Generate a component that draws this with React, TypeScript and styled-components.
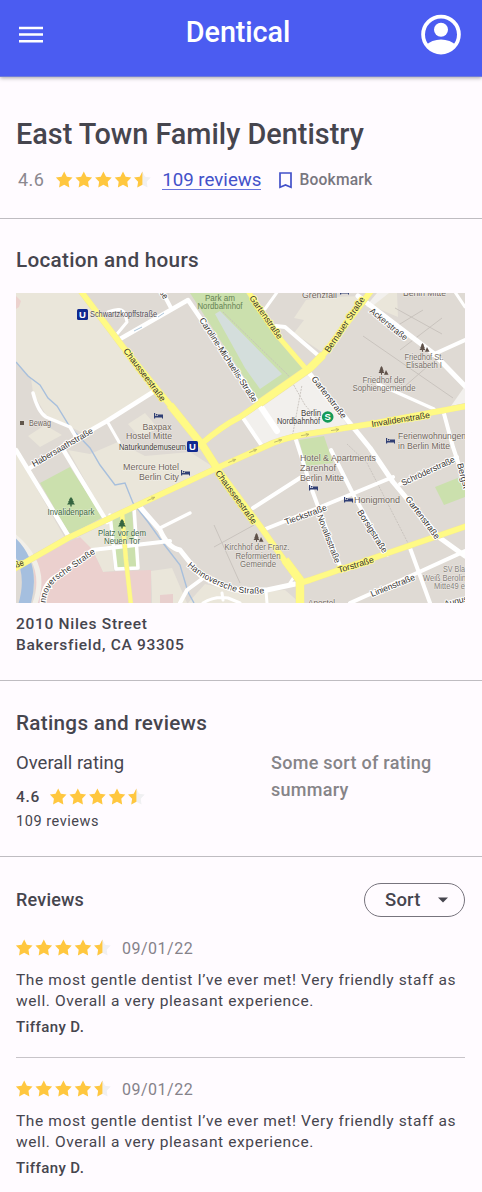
import React from "react";
import styled, { createGlobalStyle } from "styled-components";

const GlobalStyle = createGlobalStyle`
  * { box-sizing: border-box; }
  body { margin: 0; background: #fffbff; color: #46454e; font-family: Roboto, "Liberation Sans", sans-serif; }
  h1, h2, h3, p { margin: 0; }
`;

const Page = styled.div`
  width: 100%;
  min-height: 1192px;
  background: #fffbff;
  overflow: hidden;
`;

const Header = styled.header`
  height: 77px;
  padding: 0 20px 0 19px;
  display: grid;
  grid-template-columns: 40px 1fr 41px;
  align-items: start;
  background: #4b5cf1;
  border-bottom: 1px solid #6f7cd9;
  box-shadow: 0 1px 4px rgba(0, 0, 0, 0.35);
`;

const IconButton = styled.button<{ $top: number }>`
  display: flex;
  padding: 0;
  margin-top: ${(p) => p.$top}px;
  border: 0;
  background: none;
`;

const Brand = styled.div`
  margin-top: 14px;
  padding-right: 4px;
  text-align: center;
  color: #fff;
  font-size: 28.8px;
  line-height: 36px;
  font-weight: 500;
  letter-spacing: -0.1px;
`;

const Section = styled.section<{ $top: number; $bottom?: number }>`
  padding: ${(p) => p.$top}px 17px ${(p) => p.$bottom ?? 0}px 16px;
  & + & { border-top: 1px solid #bfbcc1; }
`;

const Title = styled.h1`
  font-size: 28.85px;
  line-height: 36px;
  font-weight: 500;
`;

const Heading = styled.h2`
  font-size: 20.7px;
  line-height: 28px;
  font-weight: 500;
  letter-spacing: 0.3px;
`;

const Row = styled.div<{ $mt?: number; $between?: boolean; $h?: number }>`
  display: flex;
  align-items: center;
  justify-content: ${(p) => (p.$between ? "space-between" : "flex-start")};
  height: ${(p) => p.$h ?? 24}px;
  margin-top: ${(p) => p.$mt ?? 0}px;
`;

const Text = styled.span<{ $size: number; $lh?: number; $w?: number; $ls?: number; $color?: string; $ml?: number; $mt?: number }>`
  display: block;
  white-space: nowrap;
  font-size: ${(p) => p.$size}px;
  line-height: ${(p) => p.$lh ?? 24}px;
  font-weight: ${(p) => p.$w ?? 400};
  letter-spacing: ${(p) => p.$ls ?? 0}px;
  color: ${(p) => p.$color ?? "inherit"};
  margin: ${(p) => p.$mt ?? 0}px 0 0 ${(p) => p.$ml ?? 0}px;
`;

const ReviewsLink = styled.a`
  margin: 1px 0 0 10px;
  font-size: 18.7px;
  line-height: 18px;
  color: #4351c9;
  border-bottom: 1px solid #6874dc;
  white-space: nowrap;
`;

const Bookmark = styled.div`
  display: flex;
  align-items: center;
  gap: 7px;
  margin-left: 18px;
`;

const MapFrame = styled.div`
  margin-top: 18px;
  height: 310px;
  svg { display: block; }
`;

const Columns = styled.div`
  display: grid;
  grid-template-columns: 255px 1fr;
  margin-top: 13px;
`;

const SortButton = styled.button`
  display: flex;
  align-items: center;
  width: 101px;
  height: 34px;
  padding: 0 16px 0 20px;
  justify-content: space-between;
  border: 1px solid #77747d;
  border-radius: 17px;
  background: transparent;
  color: #46454e;
  font-family: inherit;
`;

const ReviewItem = styled.article<{ $mt: number }>`
  padding-top: ${(p) => p.$mt}px;
  & + & { margin-top: 20px; border-top: 1px solid #c8c4c9; }
`;

const StarRow = styled.div<{ $ml: number }>`
  display: flex;
  margin-left: ${(p) => p.$ml}px;
`;

const STAR = "M0-8.75 2.65-3.64 8.32-2.7 4.28 1.39 5.14 7.08 0 4.5-5.14 7.08-4.28 1.39-8.32-2.7-2.65-3.64Z";
const HALF_STAR = "M0-8.75V4.5L-5.14 7.08-4.28 1.39-8.32-2.7-2.65-3.64Z";

function Stars({ ml = -2 }: { ml?: number }) {
  return (
    <StarRow $ml={ml}>
      <svg width="98" height="20" viewBox="0 0 98 20">
        {[0, 1, 2, 3].map((i) => (
          <path key={i} d={STAR} fill="#ffc73f" transform={`translate(${10.2 + i * 19.6} 10.3)`} />
        ))}
        <path d={STAR} fill="#f0f0f2" transform="translate(88.4 10.3)" />
        <path d={HALF_STAR} fill="#ffc73f" transform="translate(88.4 10.3)" />
      </svg>
    </StarRow>
  );
}

const WHITE_ROADS: [string, number][] = [
  ["M120 339 188 300 260 406", 4.5],
  ["M243 418 262 446", 4],
  ["M259 404 277 431", 6],
  ["M163 293 171 308", 4],
  ["M108 312Q122 306 125 314L127 322 117 334", 3],
  ["M153 392 107 421 63 446 30 468", 4.5],
  ["M107 421 119 442", 3],
  ["M33 393Q38 412 46 417L70 427 76 437", 3.5],
  ["M16 450 69 537", 4.5],
  ["M64 451 107 522", 4.5],
  ["M42 603Q42 584 56 576L92 550 170 541", 4],
  ["M140 507 160 530Q168 548 180 550L200 575Q216 586 237 590L267 590 300 583", 5],
  ["M160 528 190 513", 3.5],
  ["M110 515 116 569 138 568 134 507", 3.5],
  ["M253 508 303 476", 4],
  ["M263 530 318 508 393 477", 4],
  ["M400 484 457 457", 4],
  ["M296 440 312 490 340 566", 4],
  ["M331 450 353 494 387 555", 4],
  ["M305 368 370 448 393 482 440 538 465 556", 5],
  ["M358 296 400 328 433 353 465 386", 5],
  ["M432 355 465 340", 4],
  ["M378 384 434 409", 3.5],
  ["M443 410 453 447 465 483", 4],
  ["M276 326 285 327 320 357", 4],
  ["M265 309 278 291", 3],
  ["M410 548 430 603", 4],
  ["M350 603 417 573 465 551", 4],
  ["M455 292 465 307", 3],
  ["M180 603 187 590 202 579", 4],
  ["M203 603Q214 596 228 598L240 603M222 593 223 600", 3],
  ["M266 591 267 603M290 583 297 572", 3],
];

const YELLOW_ROADS: [string, number][] = [
  ["M14 569 68 538 123 512 170 490 217 468 273 443Q290 436 320 432L370 424 467 406", 5.5],
  ["M300 583 310 580 388 553 467 526", 5.5],
  ["M248 291 277 335 307 370", 4.5],
  ["M122 513 126 560 131 605", 4],
  ["M371 291 323 355 310 368 260 403 240 417Q222 426 200 445", 5.5],
  ["M80 290 123 347 170 405 203 446 217 468 260 526 299 581", 5.5],
  ["M170 405 203 446 217 468", 7.5],
  ["M323 355 310 368 260 403", 7.5],
  ["M285 560 300 580 300 605", 8],
];

type Label = { x: number; y: number; t: string; w?: number; r?: number; c?: string; a?: "middle" | "start" | "end"; halo?: string };
const BROWN = "#71665c";
const DARK = "#3e3b39";
const LABELS: Label[] = [
  { x: 90, y: 317, t: "Schwartzkopffstraße", w: 67, c: "#524d55" },
  { x: 220, y: 301, t: "Park am", a: "middle", w: 30, c: "#658253", halo: "#cbe0ad" },
  { x: 220, y: 309, t: "Nordbahnhof", a: "middle", w: 45, c: "#658253", halo: "#cbe0ad" },
  { x: 302, y: 298, t: "Grenzfall", w: 35, c: BROWN },
  { x: 403, y: 296, t: "Berlin Mitte", w: 43, c: BROWN },
  { x: 29, y: 426, t: "Bewag", w: 22, c: BROWN },
  { x: 157, y: 430, t: "Baxpax", a: "middle", w: 29, c: BROWN },
  { x: 149, y: 439, t: "Hostel Mitte", a: "middle", w: 46, c: BROWN },
  { x: 119, y: 450, t: "Naturkundemuseum", w: 67, c: DARK },
  { x: 123, y: 470, t: "Mercure Hotel", w: 56, c: BROWN },
  { x: 139, y: 480, t: "Berlin City", w: 40, c: BROWN },
  { x: 311, y: 416, t: "Berlin", a: "middle", w: 20, c: DARK },
  { x: 298.5, y: 424, t: "Nordbahnhof", a: "middle", w: 43, c: DARK },
  { x: 424, y: 360, t: "Friedhof St.", a: "middle", w: 39, c: "#777068" },
  { x: 424, y: 368, t: "Elisabeth I", a: "middle", w: 36, c: "#777068" },
  { x: 384, y: 383, t: "Friedhof der", a: "middle", w: 43, c: "#777068" },
  { x: 384, y: 391, t: "Sophiengemeinde", a: "middle", w: 63, c: "#777068" },
  { x: 398, y: 439, t: "Ferienwohnungen", w: 68, c: BROWN },
  { x: 398, y: 449, t: "in Berlin Mitte", w: 52, c: BROWN },
  { x: 300, y: 461, t: "Hotel & Apartments", w: 76, c: BROWN },
  { x: 300, y: 471, t: "Zarenhof", w: 36, c: BROWN },
  { x: 300, y: 481, t: "Berlin Mitte", w: 44, c: BROWN },
  { x: 354, y: 503, t: "Honigmond", w: 46, c: BROWN },
  { x: 71, y: 515, t: "Invalidenpark", a: "middle", w: 47, c: "#426846" },
  { x: 122, y: 536, t: "Platz vor dem", a: "middle", w: 48, c: "#426846" },
  { x: 122, y: 544, t: "Neuen Tor", a: "middle", w: 36, c: "#426846" },
  { x: 257, y: 550, t: "Kirchhof der Franz.", a: "middle", w: 65, c: "#777068" },
  { x: 258, y: 559, t: "Reformierten", a: "middle", w: 45, c: "#777068" },
  { x: 258, y: 567, t: "Gemeinde", a: "middle", w: 36, c: "#777068" },
  { x: 443, y: 572, t: "SV Bla", w: 22, c: "#86817a" },
  { x: 423, y: 581, t: "Weiß Berolin", w: 43, c: "#86817a" },
  { x: 434, y: 589, t: "Mitte49 e", w: 31, c: "#86817a" },
  { x: 308, y: 606, t: "Apostel", w: 27, c: BROWN },
  { x: 123, y: 351, t: "Chausseestraße", r: 53, w: 64, halo: "#fffa85" },
  { x: 215, y: 473, t: "Chausseestraße", r: 54, w: 64, halo: "#fffa85" },
  { x: 249, y: 298, t: "Gartenstraße", r: 55, w: 51, halo: "#fffa85" },
  { x: 329, y: 353, t: "Bernauer Straße", r: -56, w: 65, halo: "#fffa85" },
  { x: 372, y: 427, t: "Invalidenstraße", r: -9, w: 59, halo: "#fffa85" },
  { x: 339, y: 573, t: "Torstraße", r: -17, w: 37, halo: "#fffa85" },
  { x: 16, y: 568, t: "ße", r: -20, w: 9, halo: "#fffa85" },
  { x: 199, y: 320, t: "Caroline-Michaelis-Straße", r: 57, w: 99 },
  { x: 34, y: 467, t: "Habersaathstraße", r: -30, w: 69 },
  { x: 159, y: 292, t: "ße", r: 58, w: 9 },
  { x: 311, y: 379, t: "Gartenstraße", r: 52, w: 51 },
  { x: 369, y: 312, t: "Ackerstraße", r: 39, w: 46 },
  { x: 403, y: 486, t: "Schröderstraße", r: -25, w: 58 },
  { x: 405, y: 499, t: "Gartenstraße", r: 53, w: 51 },
  { x: 457, y: 464, t: "Bergst", r: 75, w: 26 },
  { x: 286, y: 525, t: "Tieckstraße", r: -20, w: 44 },
  { x: 317, y: 516, t: "Novalisstraße", r: 69, w: 51 },
  { x: 357, y: 512, t: "Borsigstraße", r: 58, w: 49 },
  { x: 372, y: 597, t: "Linienstraße", r: -22, w: 47 },
  { x: 445, y: 607, t: "Augus", r: -14, w: 24 },
];

const BEDS = [[154, 413], [181, 470], [309, 485], [344, 497], [386, 438], [340, 289]];
const TREES = [
  { x: 71, y: 497, c: "#356540" },
  { x: 122, y: 519, c: "#356540" },
  { x: 383, y: 366, c: "#5f5149", double: true },
  { x: 424, y: 343, c: "#5f5149", double: true },
  { x: 258, y: 533, c: "#5f5149", double: true },
];

function CityMap() {
  return (
    <svg width="449" height="310" viewBox="16 293 449 310" fontFamily="Liberation Sans, sans-serif">
      <defs>
        <path id="hannoverA" d="M45.5 603Q46 590 57 580L100 550" />
        <path id="hannoverB" d="M187 566Q206 583 236 592 252 595 276 592" />
      </defs>
      <rect x="16" y="293" width="449" height="310" fill="#dfdad4" />
      <g fill="#eae6da">
        <path d="M16 293H82L153 391 85 434 46 415 33 393 31 378 16 362Z" />
        <path d="M16 452 65 538 16 563ZM68 450 90 454 118 442 145 456 190 452 215 468 107 520Z" />
        <path d="M76 538 109 522 112 545 90 549ZM92 549 112 548 114 571 103 572ZM151 571 172 568 187 603H152V594ZM28 436 45 425 62 435 40 447ZM128 424 145 413 158 428 140 438Z" />
        <path d="M294 318 306 300 330 297 366 296 326 355 294 333 304 320ZM372 306 398 317 397 293H383ZM188 603 205 584 240 592 285 590 300 603Z" />
      </g>
      <path d="M16 296 21 301 19 307 16 309Z" fill="#ecd2ce" />
      <path d="M366 306 377 293H389L370 308Z" fill="#f2f0ed" />
      <path d="M33 558 80 537 92 549 103 572 151 570V603H36Z" fill="#ebd0ce" />
      <path d="M160 595 173 594V603H160Z" fill="#e8cfcd" />
      <path d="M14 536Q50 566 34 606" fill="none" stroke="#f2efe8" strokeWidth="5" />
      <path d="M11 542Q36 566 24 606" fill="none" stroke="#a5bfdf" strokeWidth="12" />
      <g fill="#cbe0ad">
        <path d="M40 483 70 467 103 517 70 535Z" />
        <path d="M112 518 132 510 134 540 114 541ZM115 548 136 546V568L117 570Z" />
        <path d="M190 293H250L305 370 260 402Z" />
        <path d="M299 440 324 436 333 463 306 466ZM435 487 465 475V497L444 505Z" />
      </g>
      <path d="M215 314 220 311 282 374 260 389 245 368Z" fill="#d4dedc" />
      <path d="M243 418 306 373 347 424 280 441 262 444Z" fill="#f2f0ed" />
      <path d="M451 406 465 386V403Z" fill="#f2f0ed" />
      <g fill="none" stroke="#c6c1bb" strokeWidth="0.9">
        <path d="M214 525 240 583M214 547 254 525M363 336 453 398M395 308 442 334M442 318 400 350M395 327 423 310M397 393 428 366" />
        <path d="M223 312 288 375 305 405 318 420M292 438 302 385M347 444 367 463 410 547" strokeDasharray="2 1" />
      </g>
      <path d="M16 362 28 376 40 385 48 398 57 406 70 427 90 448 100 465 115 485 125 483 133 503 148 522 163 543 180 565 188 592 194 603" fill="none" stroke="#a7bfdc" strokeWidth="1.4" />
      <g fill="none" stroke="#fff" strokeLinejoin="round" strokeLinecap="round">
        {WHITE_ROADS.map(([d, w]) => <path key={d} d={d} strokeWidth={w} />)}
      </g>
      <g fill="none" strokeLinejoin="round">
        {YELLOW_ROADS.map(([d, w]) => <path key={d} d={d} stroke="#efe5a3" strokeWidth={w + 0.8} />)}
        {YELLOW_ROADS.map(([d, w]) => <path key={d} d={d} stroke="#fffa85" strokeWidth={w} />)}
      </g>
      <g fill="none" stroke="#b9b468" strokeWidth="0.8">
        {[[151, 499, -25], [232, 461, -23], [253, 451, -23], [278, 441, -18], [305, 435, -10], [335, 430, -8]].map(([x, y, r]) => (
          <path key={x} d="M-4 0H4M1-1.5 4 0 1 1.5" transform={`translate(${x} ${y}) rotate(${r})`} />
        ))}
      </g>
      <path d="M134 331 142 327M158 317 164 313" fill="none" stroke="#94b6d2" strokeWidth="0.8" />
      {BEDS.map(([x, y]) => (
        <path key={`${x}-${y}`} d="M0 0H1.2V3H4V1.5H9V5.5H8V4.6H1.2V5.5H0ZM2 1H3.5V2.4H2Z" fill="#303f75" transform={`translate(${x} ${y})`} />
      ))}
      {TREES.map((t) => (
        <g key={`${t.x}-${t.y}`} fill={t.c} transform={`translate(${t.x} ${t.y})`}>
          <path d="M0 0 2 2.5 1.5 3 3 5 2.3 5.3 4 7.5H.7V9.5H-.7V7.5H-4L-2.3 5.3-3 5-1.5 3-2 2.5Z" transform={t.double ? "translate(-1.5 0) scale(.75 .92)" : undefined} />
          {t.double && <path d="M3 4 5.5 8.7H1Z" />}
        </g>
      ))}
      {LABELS.map((l) => (
        <text
          key={`${l.t}${l.x}`}
          transform={`translate(${l.x} ${l.y}) rotate(${l.r ?? 0})`}
          fontSize="8.7"
          textAnchor={l.a ?? "start"}
          textLength={l.w}
          lengthAdjust="spacingAndGlyphs"
          fill={l.c ?? "#36332f"}
          stroke={l.halo ?? (l.r !== undefined ? "#fff" : "rgba(255,255,255,0.45)")}
          strokeWidth={l.r !== undefined ? 2 : 1.2}
          strokeLinejoin="round"
          paintOrder="stroke"
        >
          {l.t}
        </text>
      ))}
      <g fontSize="8.7" fill="#36332f" stroke="#fff" strokeWidth="2" paintOrder="stroke">
        <text><textPath href="#hannoverA">nnoversche Straße</textPath></text>
        <text><textPath href="#hannoverB">Hannoversche Straße</textPath></text>
      </g>
      <rect x="20" y="421" width="4" height="4" fill="#61564b" />
      <g fill="#fff" fontSize="9.5" fontWeight="700" textAnchor="middle">
        <rect x="77" y="309" width="11" height="11" rx="1.5" fill="#10298f" />
        <text x="82.5" y="318">U</text>
        <rect x="187" y="441" width="11" height="11" rx="1.5" fill="#10298f" />
        <text x="192.5" y="450">U</text>
        <circle cx="327.7" cy="417" r="5.8" fill="#149a58" />
        <text x="327.7" y="420.3">S</text>
      </g>
    </svg>
  );
}

const REVIEWS = [
  { date: "09/01/22", lines: ["The most gentle dentist I’ve ever met! Very friendly staff as", "well. Overall a very pleasant experience."], author: "Tiffany D.", mt: 19 },
  { date: "09/01/22", lines: ["The most gentle dentist I’ve ever met! Very friendly staff as", "well. Overall a very pleasant experience."], author: "Tiffany D.", mt: 19 },
];

export default function App() {
  return (
    <Page>
      <GlobalStyle />
      <Header>
        <IconButton $top={26} aria-label="Menu">
          <svg width="24" height="17" viewBox="0 0 24 17" fill="#fff">
            <path d="M0 .7H24V3.2H0ZM0 7.3H24V9.8H0ZM0 14H24V16.5H0Z" />
          </svg>
        </IconButton>
        <Brand>Dentical</Brand>
        <IconButton $top={14} aria-label="Account">
          <svg width="41" height="41" viewBox="0 0 41 41">
            <defs>
              <clipPath id="face"><circle cx="20" cy="20.6" r="17" /></clipPath>
            </defs>
            <circle cx="20" cy="20.6" r="17.9" fill="none" stroke="#fff" strokeWidth="3.8" />
            <g fill="#fff" clipPath="url(#face)">
              <circle cx="20" cy="15.8" r="7" />
              <circle cx="20" cy="47.6" r="22.2" />
            </g>
          </svg>
        </IconButton>
      </Header>

      <Section $top={39} $bottom={26}>
        <Title>East Town Family Dentistry</Title>
        <Row $mt={16}>
          <Text $size={18} $ls={0.4} $color="#8b888f" $ml={2}>4.6</Text>
          <Stars ml={10} />
          <ReviewsLink>109 reviews</ReviewsLink>
          <Bookmark>
            <svg width="13" height="17" viewBox="0 0 13 17" fill="none" stroke="#4351c9" strokeWidth="1.7">
              <path d="M1 1H12V15.3L6.5 12.9 1 15.3Z" />
            </svg>
            <Text $size={15.6} $w={500} $ls={0.2} $color="#78767e">Bookmark</Text>
          </Bookmark>
        </Row>
      </Section>

      <Section $top={27} $bottom={24}>
        <Heading>Location and hours</Heading>
        <MapFrame style={{ marginTop: 19 }}><CityMap /></MapFrame>
        <Text $size={15.5} $lh={21} $w={500} $ls={0.7} $mt={11}>2010 Niles Street</Text>
        <Text $size={15.5} $lh={21} $w={500} $ls={0.7}>Bakersfield, CA 93305</Text>
      </Section>

      <Section $top={28} $bottom={24}>
        <Heading>Ratings and reviews</Heading>
        <Columns>
          <div>
            <Text $size={18.5} $lh={26}>Overall rating</Text>
            <Row $mt={9}>
              <Text $size={15.5} $w={500} $ls={0.7}>4.6</Text>
              <Stars ml={8} />
            </Row>
            <Text $size={14.5} $lh={20} $ls={0.55} $mt={3}>109 reviews</Text>
          </div>
          <div>
            <Text $size={18} $lh={26.5} $w={500} $ls={0.28} $color="#868488">Some sort of rating</Text>
            <Text $size={18} $lh={26.5} $w={500} $ls={0.28} $color="#868488">summary</Text>
          </div>
        </Columns>
      </Section>

      <Section $top={26}>
        <Row $between $h={34}>
          <Text $size={18} $w={500} $ls={0.2}>Reviews</Text>
          <SortButton>
            <Text $size={18.5} $w={500} $ls={0.2}>Sort</Text>
            <svg width="10" height="6" viewBox="0 0 10 6"><path d="M0 .4H10L5 5.6Z" fill="#46454e" /></svg>
          </SortButton>
        </Row>
        {REVIEWS.map((r, i) => (
          <ReviewItem key={i} $mt={r.mt}>
            <Row>
              <Stars />
              <Text $size={16} $ls={0.5} $color="#85828a" $ml={10} $mt={2}>{r.date}</Text>
            </Row>
            {r.lines.map((line, n) => (
              <Text key={line} $size={15.5} $lh={21} $ls={0.61} $mt={n === 0 ? 10 : 0}>{line}</Text>
            ))}
            <Text $size={15} $lh={20} $w={500} $ls={0.4} $mt={5}>{r.author}</Text>
          </ReviewItem>
        ))}
      </Section>
    </Page>
  );
}
